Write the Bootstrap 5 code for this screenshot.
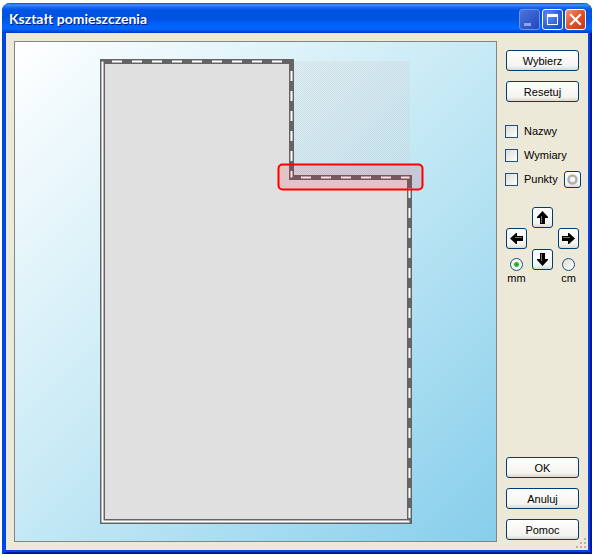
<!DOCTYPE html>
<html lang="pl">
<head>
<meta charset="utf-8">
<meta name="viewport" content="width=device-width, initial-scale=1">
<title>Kształt pomieszczenia</title>
<link rel="stylesheet" href="https://cdn.jsdelivr.net/npm/bootstrap@5.3.0/dist/css/bootstrap.min.css">
<style>
body{background:#fff;font-family:"Liberation Sans",Arial,sans-serif;font-size:11px;line-height:14px;color:#000;padding:3px 3px 3px 2px}
.xp-window{background:#ece9d8;border:solid #0046e0;border-width:0 2px 2px 4px;border-bottom-color:#0018a0;border-right-color:#0018a0;border-radius:8px 8px 0 0;padding:0 2px 2px 0;box-shadow:inset -2px -2px 0 #0046e0}
.xp-title{height:30px;margin:0 -4px;padding:2px 6px 0 7px;border-radius:8px 8px 0 0;background:linear-gradient(#0a4fd0 0,#3a93ff 2px,#1a6cf0 4px,#0054e3 7px,#0052e0 15px,#0062fa 22px,#0066ff 26px,#0050e0 28px,#0038c0 30px)}
.xp-title h1{font:700 14px/16px "Lato","Open Sans",sans-serif;color:#fff;text-shadow:1px 1px 0 #001a70}
.cap-buttons{gap:2px}
.cap-btn{width:21px;height:21px;padding:0;border:1px solid #fff;border-radius:3px;background:radial-gradient(circle at 30% 30%,#5b8cf5,#2456dc 70%,#1a48c8);display:block}
.cap-btn svg,.tool-btn svg,.pt-btn svg{display:block;margin:auto}
.cap-btn.cap-min{border-color:#6f95ea;background:linear-gradient(135deg,#4a74dc,#2247c0)}
.cap-btn.cap-close{background:linear-gradient(135deg,#f0967a,#e2512b 50%,#c8380f)}
.xp-body{padding:8px 9px 8px 8px;gap:9px}
.plan{border:1px solid #858585;background:linear-gradient(135deg,#fff 0,#c5e9f5 50%,#87ceeb 100%);min-height:0}
.side{width:73px;padding:9px 0 2px}
.side-group{gap:10px}
.xp-btn{height:21px;padding:0;font:11px/18px "Liberation Sans",Arial,sans-serif;color:#000;border:1px solid #003c74;border-radius:3px;background:linear-gradient(#fff,#f4f3ee 80%,#dcd8cc)}
.xp-btn:hover{border-color:#003c74;background:#fff}
.checks{margin-top:17px}
.check-row{height:24px;gap:6px;margin-left:-1px}
.check-row input,.radio-cell input{appearance:none;flex:none;width:13px;height:13px;margin:0;border:1px solid #1c5180;background:linear-gradient(135deg,#dcdcd7,#fff)}
.radio-cell input{border-radius:50%}
.radio-cell input:checked{background:radial-gradient(circle,#21a121 0,#36b836 2px,#f4f4f1 3px)}
.tool-btn{width:21px;height:21px}
.pt-btn{width:17px;height:17px}
.pads{grid-template:21px 21px auto / 21px 21px 21px;gap:0 5px;margin-top:16px}
.pad-up,.pad-down{grid-column:2}
.pad-left,.radio-mm{grid-column:1}
.pad-right,.radio-cm{grid-column:3}
.pad-left,.pad-right{grid-row:2}
.pad-down,.radio-cell{grid-row:3}
.radio-cell{padding-top:9px}
.grip{right:2px;bottom:2px}
</style>
<script src="https://cdn.jsdelivr.net/npm/bootstrap@5.3.0/dist/js/bootstrap.bundle.min.js"></script>
</head>
<body class="min-vh-100 d-flex flex-column">
<main class="xp-window flex-grow-1 d-flex flex-column position-relative">
<header class="xp-title d-flex align-items-center justify-content-between">
<h1 class="m-0">Kształt pomieszczenia</h1>
<div class="cap-buttons d-flex">
<button class="cap-btn cap-min" type="button" aria-label="Minimalizuj" disabled><svg width="19" height="19"><path d="M4 13h7v3H4z" fill="#8ba6ec"/></svg></button>
<button class="cap-btn" type="button" aria-label="Maksymalizuj"><svg width="19" height="19"><path d="M4 4h11v11H4zM5 7v7h9V7z" fill="#fff" fill-rule="evenodd"/></svg></button>
<button class="cap-btn cap-close" type="button" aria-label="Zamknij"><svg width="19" height="19"><path d="M5 5l9 9M14 5l-9 9" stroke="#fff" stroke-width="2.2" stroke-linecap="square"/></svg></button>
</div>
</header>
<div class="xp-body flex-grow-1 d-flex">
<section class="plan flex-grow-1 d-flex" aria-label="Plan">
<svg class="w-100 h-100" viewBox="15 42 481 499">
<defs><pattern id="dots" width="2" height="2" patternUnits="userSpaceOnUse"><path d="M0 0h1v1H0zM1 1h1v1H1z" fill="#d0c4c4" fill-opacity=".4" shape-rendering="crispEdges"/></pattern></defs>
<path d="M293 61h117v117H293z" fill="url(#dots)"/>
<path d="M102.500 61.500H291.500V177.500H409.500V521.500H102.500z" fill="#e0e0e0" stroke="#646464" stroke-width="5"/>
<path d="M102.500 61.500V521.500H409.500" fill="none" stroke="#fff" stroke-width="2"/>
<path d="M102 61.500H291.500M291.500 61V177.500M291 177.500H409.500M409.500 178V521" fill="none" stroke="#fff" stroke-width="2" stroke-dasharray="10" stroke-dashoffset="10"/>
<rect x="278.500" y="164.500" width="144" height="25" rx="4" fill="#f00020" fill-opacity=".13" stroke="#f00" stroke-width="2"/>
</svg>
</section>
<aside class="side flex-shrink-0 d-flex flex-column">
<div class="side-group d-grid">
<button class="btn xp-btn" type="button">Wybierz</button>
<button class="btn xp-btn" type="button">Resetuj</button>
</div>
<div class="checks">
<div class="check-row d-flex align-items-center"><input type="checkbox" id="names"><label for="names">Nazwy</label></div>
<div class="check-row d-flex align-items-center"><input type="checkbox" id="dims"><label for="dims">Wymiary</label></div>
<div class="check-row d-flex align-items-center"><input type="checkbox" id="points"><label for="points">Punkty</label><button class="btn xp-btn pt-btn ms-auto" type="button" aria-label="Punkt"><svg width="15" height="15"><circle cx="7.500" cy="7.500" r="4" fill="none" stroke="#b0b0b0" stroke-width="2.500"/></svg></button></div>
</div>
<div class="pads d-grid">
<button class="btn xp-btn tool-btn pad-up" type="button" aria-label="W górę"><svg width="19" height="19"><path d="M9.500 3L15 9v1h-3v6H7v-6H4V9z"/><path d="M8.500 8v7" stroke="#777"/></svg></button>
<button class="btn xp-btn tool-btn pad-left" type="button" aria-label="W lewo"><svg width="19" height="19"><path d="M3 9.500L9 4h1v3h6v5h-6v3H9z"/><path d="M8 8.500h7" stroke="#777"/></svg></button>
<button class="btn xp-btn tool-btn pad-right" type="button" aria-label="W prawo"><svg width="19" height="19"><path d="M16 9.500L10 4H9v3H3v5h6v3h1z"/><path d="M4 8.500h7" stroke="#777"/></svg></button>
<button class="btn xp-btn tool-btn pad-down" type="button" aria-label="W dół"><svg width="19" height="19"><path d="M9.500 16L15 10V9h-3V3H7v6H4v1z"/><path d="M8.500 4v7" stroke="#777"/></svg></button>
<div class="radio-cell radio-mm d-flex flex-column align-items-center"><input type="radio" name="unit" id="mm" checked><label for="mm">mm</label></div>
<div class="radio-cell radio-cm d-flex flex-column align-items-center"><input type="radio" name="unit" id="cm"><label for="cm">cm</label></div>
</div>
<div class="side-group d-grid mt-auto">
<button class="btn xp-btn" type="button">OK</button>
<button class="btn xp-btn" type="button">Anuluj</button>
<button class="btn xp-btn" type="button">Pomoc</button>
</div>
</aside>
</div>
<svg class="grip position-absolute" width="12" height="12" fill="#b8b4a4"><path d="M8 0h2v2H8zM8 4h2v2H8zM4 4h2v2H4zM8 8h2v2H8zM4 8h2v2H4zM0 8h2v2H0z"/></svg>
</main>
</body>
</html>
